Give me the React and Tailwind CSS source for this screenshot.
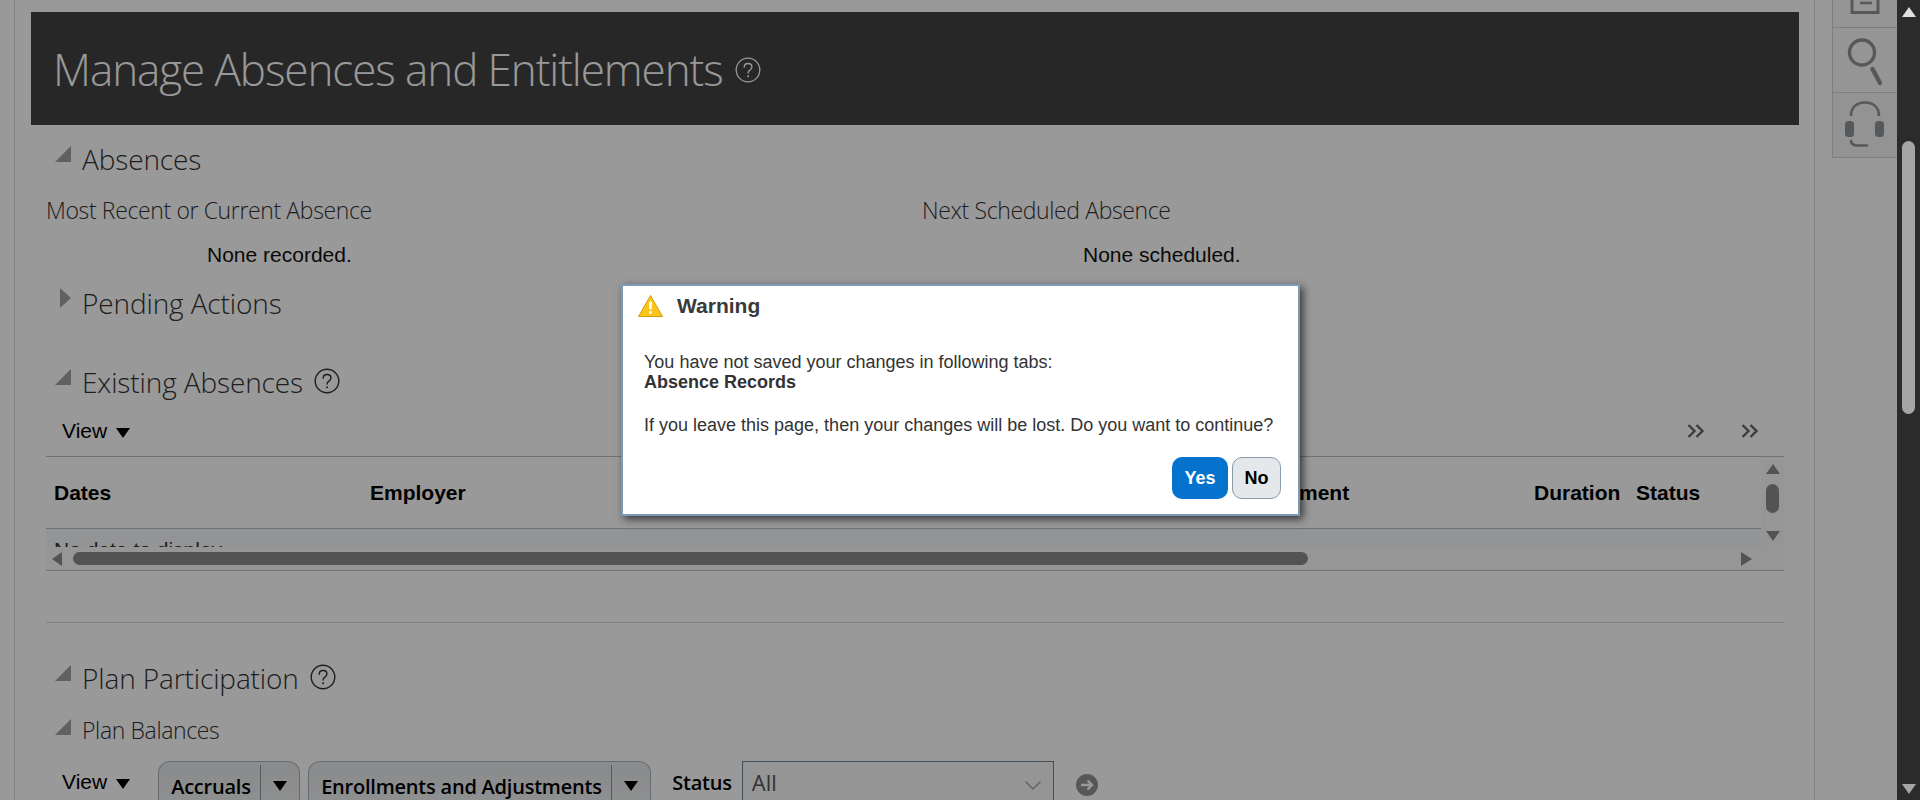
import React from "react";

function HelpIcon({ size = 26, className = "" }) {
  return (
    <svg width={size} height={size} viewBox="0 0 26 26" fill="none" className={className}>
      <circle cx="13" cy="13" r="11.8" stroke="#333" strokeWidth="1.4" />
      <path d="M9.2 10.2c0-2.3 1.7-3.7 3.9-3.7s3.8 1.4 3.8 3.4c0 1.5-.8 2.3-2 3.2-1.2.8-1.8 1.5-1.8 3" stroke="#333" strokeWidth="1.4" strokeLinecap="round" />
      <circle cx="13.1" cy="19.3" r="1" fill="#333" />
    </svg>
  );
}

function Triangle({ open = true, size = 16 }) {
  return open ? (
    <svg width={size} height={size} viewBox="0 0 16 16" className="shrink-0">
      <polygon points="16,0 16,16 0,16" fill="#9da0a4" />
    </svg>
  ) : (
    <svg width="12" height="20" viewBox="0 0 12 20" className="shrink-0 ml-[5px]">
      <polygon points="0,0 11,10 0,20" fill="#9da0a4" />
    </svg>
  );
}

function Caret({ className = "" }) {
  return (
    <svg width="14" height="10" viewBox="0 0 14 10" className={className}>
      <polygon points="0,0 14,0 7,10" fill="#000" />
    </svg>
  );
}

function SectionHead({ title, open = true, help = false, className = "" }) {
  return (
    <div className={`flex items-center pl-[9px] ${className}`}>
      <div className="w-[27px] -mt-[10px]">
        <Triangle open={open} />
      </div>
      <span className="font-['Open_Sans',sans-serif] font-light text-[28px] tracking-[-0.12px] text-[#333] leading-none">{title}</span>
      {help && <HelpIcon className="ml-[11px] -mt-[2px]" />}
    </div>
  );
}

function SplitButton({ label, width }) {
  return (
    <div className={`flex h-[50px] ${width} rounded-t-[12px] border border-b-0 border-[#a9b3bb] bg-gradient-to-b from-[#e6e8ea] to-[#eff0f1] px-[12px] pt-[3px]`}>
      <span className="flex-1 pt-[8px] font-['Open_Sans',sans-serif] font-semibold text-[20px] tracking-[-0.22px] text-black leading-[28px] whitespace-nowrap">{label}</span>
      <div className="w-[39px] -mr-[12px] border-l border-[#8f979e] pl-[12px] pt-[16px]">
        <Caret />
      </div>
    </div>
  );
}

function SideRail() {
  return (
    <aside className="ml-[17px] w-[65px] shrink-0 self-start">
      <div className="h-[28px] border-l border-b border-[#cfd3d6] bg-[#f8f8f8]">
        <svg width="64" height="27" viewBox="0 0 64 27" fill="none">
          <path d="M19 0v12.5h26V0" stroke="#8e949a" strokeWidth="3" />
          <path d="M27 3h12" stroke="#8e949a" strokeWidth="2.5" />
        </svg>
      </div>
      <div className="h-[65px] border-l border-b border-[#cfd3d6] bg-[#f8f8f8]">
        <svg width="64" height="64" viewBox="0 0 64 64" fill="none">
          <circle cx="29" cy="24.5" r="12.5" stroke="#8e949a" strokeWidth="3.4" />
          <path d="M39.5 41l7.5 14" stroke="#8e949a" strokeWidth="4.4" strokeLinecap="round" />
        </svg>
      </div>
      <div className="h-[65px] border-l border-b border-[#cfd3d6] bg-[#f6f6f6]">
        <svg width="64" height="64" viewBox="0 0 64 64" fill="none">
          <path d="M18 23c0-9 6-13.500 14-13.500S46 14 46 23" stroke="#8e949a" strokeWidth="2.600" />
          <rect x="12" y="28" width="9" height="16" rx="3.500" fill="#8e949a" />
          <rect x="42" y="28" width="9" height="16" rx="3.500" fill="#8e949a" />
          <path d="M18 48c.5 3 2.500 4.500 6 4.500h10" stroke="#8e949a" strokeWidth="2.600" strokeLinecap="round" />
        </svg>
      </div>
    </aside>
  );
}

function ExistingAbsencesTable() {
  return (
    <div className="mt-[10px] h-[115px] border-y border-[#b9bdc0]">
      <div className="flex h-[90px]">
        <div className="flex-1 min-w-0">
          <div className="flex h-[72px] items-center pl-[8px] pt-[1px] border-b border-[#b3bcc4] text-[21px] font-bold text-black">
            <div className="w-[316px]">Dates</div>
            <div className="w-[859px]">Employer</div>
            <div className="w-[305px]">Assignment</div>
            <div className="w-[102px]">Duration</div>
            <div>Status</div>
          </div>
          <div className="h-[18px] overflow-hidden bg-[#f6f7f8] pl-[8px] pt-[9px] text-[21px] leading-[24px] text-[#333]">No data to display.</div>
        </div>
        <div className="flex w-[23px] flex-col items-center bg-[#fbfbfb] pt-[7px]">
          <svg width="14" height="10" viewBox="0 0 14 10"><polygon points="7,0 14,10 0,10" fill="#8a8a8a" /></svg>
          <div className="mt-[10px] h-[29px] w-[13px] rounded-full bg-[#8a8a8a]" />
          <svg width="14" height="10" viewBox="0 0 14 10" className="mt-[18px]"><polygon points="0,0 14,0 7,10" fill="#8a8a8a" /></svg>
        </div>
      </div>
      <div className="flex h-[23px] items-center bg-[#fbfbfb] pl-[6px]">
        <svg width="10" height="14" viewBox="0 0 10 14"><polygon points="10,0 10,14 0,7" fill="#8a8a8a" /></svg>
        <div className="ml-[11px] h-[13px] w-[1235px] rounded-full bg-[#8a8a8a]" />
        <svg width="11" height="14" viewBox="0 0 11 14" className="ml-[433px]"><polygon points="0,0 11,7 0,14" fill="#8a8a8a" /></svg>
      </div>
    </div>
  );
}

function WarningDialog() {
  return (
    <div className="absolute left-[621px] top-[284px] h-[232px] w-[679px] border-2 border-[#7d9ab5] bg-white shadow-[3px_3px_8px_rgba(0,0,0,0.65)]">
      <div className="flex h-[38px] items-center pl-[15px] pt-[1px]">
        <svg width="25" height="22" viewBox="0 0 25 22">
          <path d="M12.500 0.500 24.500 21.500H.5Z" fill="#fcc419" stroke="#d49d0c" strokeWidth="1" strokeLinejoin="round" />
          <rect x="11.200" y="6.500" width="2.600" height="8" rx="1" fill="#fff" />
          <circle cx="12.500" cy="17.500" r="1.500" fill="#fff" />
        </svg>
        <span className="ml-[14px] text-[21px] font-bold text-[#3a3a3a]">Warning</span>
      </div>
      <div className="mt-[28px] pl-[21px] text-[18px] leading-[20px] text-[#333]">
        <div>You have not saved your changes in following tabs:</div>
        <div className="font-bold">Absence Records</div>
        <div className="mt-[23px]">If you leave this page, then your changes will be lost. Do you want to continue?</div>
      </div>
      <div className="mt-[22px] flex justify-end gap-[4px] pr-[17px]">
        <button className="h-[42px] w-[56px] rounded-[10px] bg-[#0572ce] text-[18px] font-bold text-white">Yes</button>
        <button className="h-[42px] w-[49px] rounded-[10px] border border-[#8a9cab] bg-[#e4e8ea] text-[18px] font-bold text-black">No</button>
      </div>
    </div>
  );
}

export default function App() {
  return (
    <div className="flex h-[800px] overflow-hidden bg-white font-['Liberation_Sans',Arial,sans-serif]">
      <div className="relative flex flex-1 min-w-0 overflow-hidden">
        <div className="w-[15px] shrink-0 border-r border-[#d4d8db]" />
        <main className="w-[1800px] shrink-0 border-r border-[#d4d8db] pl-[16px] pr-[15px] pt-[12px]">
          <header className="flex h-[113px] items-center bg-[#424242] pl-[22px]">
            <h1 className="font-['Open_Sans',sans-serif] font-light text-[44px] tracking-[-1.08px] text-white leading-none">Manage Absences and Entitlements</h1>
            <svg width="26" height="26" viewBox="0 0 26 26" fill="none" className="ml-[12px] mt-[2px]">
              <circle cx="13" cy="13" r="11.800" stroke="#fff" strokeWidth="1.300" />
              <path d="M9.200 10.200c0-2.300 1.700-3.700 3.900-3.700s3.800 1.400 3.800 3.400c0 1.500-.8 2.300-2 3.200-1.200.8-1.800 1.500-1.800 3" stroke="#fff" strokeWidth="1.300" strokeLinecap="round" />
              <circle cx="13.100" cy="19.300" r="1" fill="#fff" />
            </svg>
          </header>

          <div className="px-[15px]">
            <SectionHead title="Absences" className="mt-[14px] h-[40px]" />
            <div className="mt-[16px] flex h-[72px] font-['Open_Sans',sans-serif]">
              <div className="w-[876px]">
                <div className="font-light text-[23px] tracking-[-0.37px] text-[#333] leading-[30px]">Most Recent or Current Absence</div>
                <div className="mt-[18px] pl-[161px] font-['Liberation_Sans',sans-serif] text-[21px] leading-[24px] text-[#111]">None recorded.</div>
              </div>
              <div>
                <div className="font-light text-[23px] tracking-[-0.37px] text-[#333] leading-[30px]">Next Scheduled Absence</div>
                <div className="mt-[18px] pl-[161px] font-['Liberation_Sans',sans-serif] text-[21px] leading-[24px] text-[#111]">None scheduled.</div>
              </div>
            </div>
            <SectionHead title="Pending Actions" open={false} className="mt-[16px] h-[40px]" />
            <SectionHead title="Existing Absences" help className="mt-[39px] h-[40px]" />
            <div className="mt-[14px] flex h-[30px] items-center pl-[16px] pr-[25px] text-[21px] text-black">
              <span>View</span>
              <Caret className="ml-[9px] mt-[3px]" />
              <div className="ml-auto flex gap-[36px]">
                <svg width="18" height="14" viewBox="0 0 18 14" fill="none"><path d="M1.500 1l6 6-6 6M9.500 1l6 6-6 6" stroke="#666" strokeWidth="2.400" /></svg>
                <svg width="18" height="14" viewBox="0 0 18 14" fill="none"><path d="M1.500 1l6 6-6 6M9.500 1l6 6-6 6" stroke="#666" strokeWidth="2.400" /></svg>
              </div>
            </div>
            <ExistingAbsencesTable />
            <div className="mt-[51px] border-t border-[#d4d8db]" />
            <SectionHead title="Plan Participation" help className="mt-[35px] h-[40px]" />
            <div className="mt-[17px] flex h-[30px] items-center pl-[9px]">
              <div className="w-[27px] -mt-[6px]"><Triangle /></div>
              <span className="font-['Open_Sans',sans-serif] font-light text-[23px] tracking-[-0.37px] text-[#333] leading-none">Plan Balances</span>
            </div>
            <div className="mt-[16px] flex items-start pl-[16px]">
              <span className="mt-[9px] text-[21px] leading-[24px] text-black">View</span>
              <Caret className="ml-[9px] mt-[18px]" />
              <div className="ml-[28px] flex gap-[8px]">
                <SplitButton label="Accruals" width="w-[142px]" />
                <SplitButton label="Enrollments and Adjustments" width="w-[343px]" />
              </div>
              <span className="ml-[21px] mt-[8px] font-['Open_Sans',sans-serif] font-semibold text-[20px] tracking-[-0.2px] text-black leading-[28px]">Status</span>
              <div className="ml-[10px] flex h-[50px] w-[312px] items-start justify-between border border-[#6f8494] bg-[#f8f9f9] pl-[9px] pr-[12px] pt-[6px] font-['Open_Sans',sans-serif] text-[22px] text-[#555] leading-[28px]">
                <span>All</span>
                <svg width="16" height="9" viewBox="0 0 16 9" fill="none" className="mt-[13px]"><path d="M.5.5 8 8l7.500-7.500" stroke="#a8a8a8" strokeWidth="1.500" /></svg>
              </div>
              <svg width="22" height="22" viewBox="0 0 22 22" fill="none" className="ml-[22px] mt-[13px]">
                <circle cx="11" cy="11" r="11" fill="#8e9194" />
                <path d="M5 11h11M11.500 6.500 16 11l-4.500 4.500" stroke="#fff" strokeWidth="2.400" />
              </svg>
            </div>
          </div>
        </main>
        <SideRail />
        <div className="absolute inset-0 bg-black/40" />
        <WarningDialog />
      </div>

      <div className="flex w-[23px] shrink-0 flex-col items-center bg-[#2b2b2b] pt-[7px] pb-[6px]">
        <svg width="14" height="10" viewBox="0 0 14 10"><polygon points="7,0 14,10 0,10" fill="#e0e0e0" /></svg>
        <div className="mt-[124px] h-[273px] w-[13px] rounded-full bg-[#a5a5a5]" />
        <svg width="14" height="10" viewBox="0 0 14 10" className="mt-auto"><polygon points="0,0 14,0 7,10" fill="#a5a5a5" /></svg>
      </div>
    </div>
  );
}
